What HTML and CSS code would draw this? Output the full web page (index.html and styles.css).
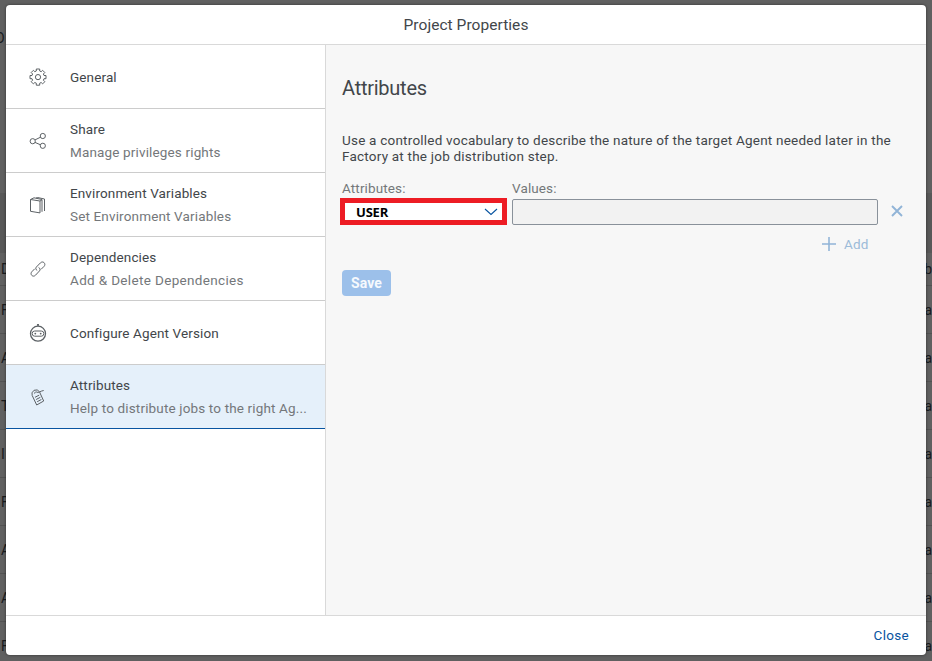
FILE: index.html
```html
<!DOCTYPE html>
<html lang="en">
<head>
<meta charset="utf-8">
<title>Project Properties</title>
<link rel="stylesheet" href="styles.css">
</head>
<body>
<div class="page">
  <div class="page-top">O</div>
  <div class="page-band"></div>
  <div class="row row-head"><span>D</span><span>b</span></div>
  <div class="row"><span>F</span><span>a</span></div>
  <div class="row"><span>A</span><span>a</span></div>
  <div class="row"><span>T</span><span>a</span></div>
  <div class="row"><span>I</span><span>a</span></div>
  <div class="row"><span>F</span><span>a</span></div>
  <div class="row"><span>A</span><span>a</span></div>
  <div class="row"><span>A</span><span>a</span></div>
  <div class="row"><span>F</span><span>a</span></div>
</div>
<div class="dialog">
  <header class="dialog-head"><span class="title">Project Properties</span></header>
  <div class="dialog-body">
    <nav class="side">
      <div class="item single">
        <svg class="icon" viewBox="0 0 18 18"><path d="M7.300 1h3.400v2l1.500.7L13.600 2.300l2.200 2.200-1.400 1.500.6 1.500h2v3.200h-2l-.6 1.500 1.400 1.500-2.200 2.200-1.400-1.400-1.500.7v2H7.300v-2l-1.500-.7-1.400 1.400-2.200-2.200 1.400-1.500-.6-1.500H1V7.500h2l.6-1.500-1.400-1.500 2.200-2.200 1.400 1.400 1.500-.7z"/><circle cx="9" cy="9.100" r="2.600"/></svg>
        <div class="label"><span class="name">General</span></div>
      </div>
      <div class="item">
        <svg class="icon" viewBox="0 0 18 18"><circle cx="3.700" cy="9.200" r="2.600"/><circle cx="13.800" cy="4" r="2.600"/><circle cx="13.800" cy="13.800" r="2.600"/><path d="M6 7.900l5.500-2.700M6 10.400l5.500 2.400"/></svg>
        <div class="label"><span class="name">Share</span><span class="sub">Manage privileges rights</span></div>
      </div>
      <div class="item">
        <svg class="icon" viewBox="0 0 18 18"><path d="M1.500 3.500v11.800l9.500 1.600V5zM1.500 3.500l3.500-1.700 8 1.700v12.300M11 5l2-1.200M7 2.100l1.500-.6 7 1.500v12"/></svg>
        <div class="label"><span class="name">Environment Variables</span><span class="sub">Set Environment Variables</span></div>
      </div>
      <div class="item">
        <svg class="icon" viewBox="0 0 18 18"><path d="M8.200 10.400c-1.700-.8-1.800-2.300-.8-3.400l4-4.100c1.200-1.200 2.600-1.200 3.700-.2 1 1.100 1 2.500 0 3.600l-3 3M9.600 7.500c1.700.8 1.900 2.300.9 3.400l-4 4.300c-1.200 1.200-2.600 1.200-3.700.2-1-1.100-1-2.500 0-3.600l2.900-3"/></svg>
        <div class="label"><span class="name">Dependencies</span><span class="sub wide">Add &amp; Delete Dependencies</span></div>
      </div>
      <div class="item single">
        <svg class="icon" viewBox="0 0 18 18"><circle cx="9" cy="9.700" r="7.500" class="heavy"/><rect x="3.200" y="7" width="11.600" height="5.200" rx="2.500"/><circle cx="9" cy="1" r="1.100" class="dot"/><circle cx="6.300" cy="9.600" r=".9" class="dot"/><circle cx="11.700" cy="9.600" r=".9" class="dot"/></svg>
        <div class="label"><span class="name">Configure Agent Version</span></div>
      </div>
      <div class="item selected">
        <svg class="icon" viewBox="0 0 18 18"><path d="M3.200 7.500L3 4.800l2-2.500 3.500-.4 2.200 2.400 4 8.700-7 4zM5.600 5.600c.1-1.700 1.300-2.100 2.400-1.400 1.700 1.100 3.700-1.400 6.700-1.700M6 9.300l4.200-2.200M7.100 11.500l4.200-2.200M8.200 13.700l4.200-2.200"/></svg>
        <div class="label"><span class="name">Attributes</span><span class="sub">Help to distribute jobs to the right Ag...</span></div>
      </div>
    </nav>
    <main class="content">
      <h1>Attributes</h1>
      <p>Use a controlled vocabulary to describe the nature of the target Agent needed later in the<br>Factory at the job distribution step.</p>
      <div class="fields">
        <div class="field">
          <span class="caption">Attributes:</span>
          <div class="select"><b>USER</b><svg viewBox="0 0 14 8"><path d="M1 1l6 5.500L13 1"/></svg></div>
        </div>
        <div class="field value">
          <span class="caption">Values:</span>
          <div class="input"></div>
        </div>
        <svg class="remove" viewBox="0 0 12 12"><path d="M1 1l10 10M11 1L1 11"/></svg>
      </div>
      <div class="add"><svg viewBox="0 0 14 14"><path d="M7 0v14M0 7h14"/></svg><span>Add</span></div>
      <div class="save"><span>Save</span></div>
    </main>
  </div>
  <footer class="dialog-foot"><span>Close</span></footer>
</div>
</body>
</html>
```
FILE: styles.css
```css
* { box-sizing: border-box; }
body {
  margin: 0;
  height: 661px;
  overflow: hidden;
  background: #606060;
  font-family: Roboto, "Liberation Sans", sans-serif;
  font-size: 13.5px;
  letter-spacing: .12px;
  color: #42464a;
}
.page { height: 661px; overflow: hidden; color: #181b1e; font-size: 14px; letter-spacing: 0; }
.page-top { height: 193px; padding-top: 30px; margin-left: -5px; line-height: 16px; }
.page-band { height: 60px; background: #585858; }
.row {
  display: flex;
  justify-content: space-between;
  align-items: center;
  height: 48px;
  padding-left: 1px;
  border-bottom: 1px solid #525252;
}
.row-head { height: 33px; }
.dialog {
  position: absolute;
  left: 6px;
  top: 5px;
  width: 920px;
  height: 650px;
  display: flex;
  flex-direction: column;
  background: #fff;
  border-radius: 4px;
  overflow: hidden;
  box-shadow: 0 0 3px rgba(0, 0, 0, .5);
}
.dialog-head {
  height: 40px;
  border-bottom: 1px solid #d9d9d9;
  font-size: 15.5px;
  letter-spacing: .05px;
  line-height: 40px;
  text-align: center;
}
.dialog-body { flex: 1; display: flex; min-height: 0; }
.side { width: 320px; border-right: 1px solid #d9d9d9; }
.item {
  display: flex;
  align-items: center;
  height: 64px;
  padding-left: 23px;
  border-bottom: 1px solid #ccc;
}
.selected { background: #e5f0fa; border-bottom-color: #0854a0; }
.icon { width: 18px; height: 18px; margin-right: 23px; fill: none; stroke: #5c6165; stroke-width: 1; }
.heavy { stroke-width: 1.3; }
.dot { fill: #5c6165; stroke: none; }
.label { display: flex; flex-direction: column; line-height: 23px; white-space: nowrap; }
.single .label { padding-top: 2px; }
.label span { align-self: flex-start; }
.sub { color: #74777a; letter-spacing: .15px; }
.wide { letter-spacing: .34px; }
.content { flex: 1; padding: 0 16px; background: #f7f7f7; }
h1 { margin: 31px 0 0; font-size: 20px; font-weight: 400; letter-spacing: -.25px; line-height: 24px; }
p { margin: 32px 0 0; letter-spacing: .217px; line-height: 16px; white-space: nowrap; }
.fields { display: flex; margin: 16px 0 0 -2px; }
.field { width: 167px; }
.caption { display: block; width: max-content; margin-left: 2px; line-height: 17px; color: #74777a; }
.select {
  display: flex;
  align-items: center;
  justify-content: space-between;
  height: 27px;
  margin-top: 1px;
  padding: 1px 4px 0 11px;
  border: 5px solid #ed1c24;
  background: #fff;
  color: #000;
  font: 13px "Open Sans", sans-serif;
  letter-spacing: -.2px;
}
.select svg { width: 14px; height: 8px; fill: none; stroke: #0854a0; stroke-width: 1.1; }
.value { width: 366px; margin-left: 5px; }
.value .caption { margin-left: 0; }
.input { height: 26px; margin-top: 2px; border: 1px solid #89919a; border-radius: 2px; background: #f2f2f2; }
.remove { width: 12px; height: 12px; margin: 25px 0 0 13px; fill: none; stroke: #91b4d7; stroke-width: 1.9; }
.add { display: flex; align-items: center; height: 16px; margin: 11px 0 0 480px; color: #9cbbd9; }
.add svg { width: 14px; height: 14px; margin-right: 8px; stroke: #91b4d7; stroke-width: 1.6; }
.save {
  width: 49px;
  height: 26px;
  margin-top: 18px;
  border-radius: 4px;
  background: #9cc0ea;
  color: #f5f9fd;
  font-size: 14px;
  font-weight: 700;
  line-height: 26px;
  text-align: center;
}
.dialog-foot {
  height: 40px;
  padding-right: 17px;
  border-top: 1px solid #d9d9d9;
  color: #0854a0;
  letter-spacing: .3px;
  line-height: 38px;
  text-align: right;
}
```
